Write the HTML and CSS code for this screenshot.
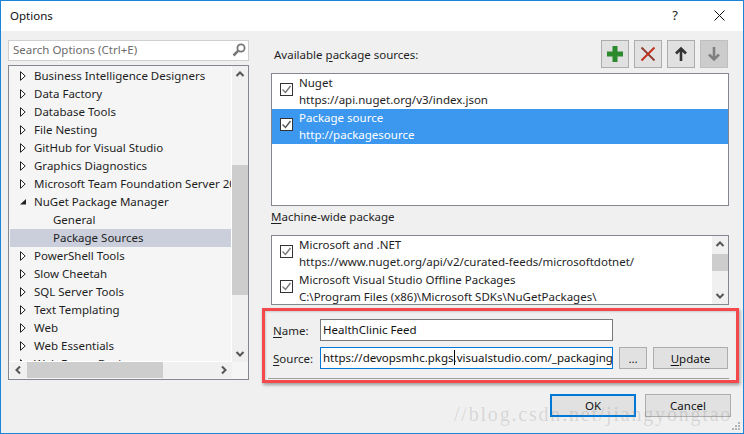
FILE: index.html
```html
<!DOCTYPE html>
<html lang="en">
<head>
<meta charset="utf-8">
<title>Options</title>
<link rel="stylesheet" href="styles.css">
</head>
<body>
<div class="window">
  <header class="titlebar">
    <span class="title">Options</span>
    <div class="title-actions">
      <span class="help">?</span>
      <svg class="close" width="11" height="11" viewBox="0 0 11 11"><path d="M.5.5l10 10M10.500.5l-10 10" stroke="#111" fill="none"/></svg>
    </div>
  </header>
  <main class="content">
    <aside class="left">
      <div class="search">
        <span>Search Options (Ctrl+E)</span>
        <svg width="14" height="14" viewBox="0 0 14 14"><circle cx="9" cy="5" r="3.6" fill="none" stroke="#777" stroke-width="1.8"/><path d="M6.300 7.700L1.500 12.500" stroke="#777" stroke-width="2.6"/></svg>
      </div>
      <div class="tree">
        <ul class="tree-rows">
          <li class="row"><svg class="tw" width="6" height="10" viewBox="0 0 6 10"><path d="M.5.700v8.600L5.200 5z" fill="#fff" stroke="#222"/></svg>Business Intelligence Designers</li>
          <li class="row"><svg class="tw" width="6" height="10" viewBox="0 0 6 10"><path d="M.5.700v8.600L5.200 5z" fill="#fff" stroke="#222"/></svg>Data Factory</li>
          <li class="row"><svg class="tw" width="6" height="10" viewBox="0 0 6 10"><path d="M.5.700v8.600L5.200 5z" fill="#fff" stroke="#222"/></svg>Database Tools</li>
          <li class="row"><svg class="tw" width="6" height="10" viewBox="0 0 6 10"><path d="M.5.700v8.600L5.200 5z" fill="#fff" stroke="#222"/></svg>File Nesting</li>
          <li class="row"><svg class="tw" width="6" height="10" viewBox="0 0 6 10"><path d="M.5.700v8.600L5.200 5z" fill="#fff" stroke="#222"/></svg>GitHub for Visual Studio</li>
          <li class="row"><svg class="tw" width="6" height="10" viewBox="0 0 6 10"><path d="M.5.700v8.600L5.200 5z" fill="#fff" stroke="#222"/></svg>Graphics Diagnostics</li>
          <li class="row"><svg class="tw" width="6" height="10" viewBox="0 0 6 10"><path d="M.5.700v8.600L5.200 5z" fill="#fff" stroke="#222"/></svg>Microsoft Team Foundation Server 2015 Power Tools</li>
          <li class="row"><svg class="tw" width="6" height="10" viewBox="0 0 6 10"><path d="M0 7.500L6 2v5.500z" fill="#222"/></svg>NuGet Package Manager</li>
          <li class="row child">General</li>
          <li class="row child selected">Package Sources</li>
          <li class="row"><svg class="tw" width="6" height="10" viewBox="0 0 6 10"><path d="M.5.700v8.600L5.200 5z" fill="#fff" stroke="#222"/></svg>PowerShell Tools</li>
          <li class="row"><svg class="tw" width="6" height="10" viewBox="0 0 6 10"><path d="M.5.700v8.600L5.200 5z" fill="#fff" stroke="#222"/></svg>Slow Cheetah</li>
          <li class="row"><svg class="tw" width="6" height="10" viewBox="0 0 6 10"><path d="M.5.700v8.600L5.200 5z" fill="#fff" stroke="#222"/></svg>SQL Server Tools</li>
          <li class="row"><svg class="tw" width="6" height="10" viewBox="0 0 6 10"><path d="M.5.700v8.600L5.200 5z" fill="#fff" stroke="#222"/></svg>Text Templating</li>
          <li class="row"><svg class="tw" width="6" height="10" viewBox="0 0 6 10"><path d="M.5.700v8.600L5.200 5z" fill="#fff" stroke="#222"/></svg>Web</li>
          <li class="row"><svg class="tw" width="6" height="10" viewBox="0 0 6 10"><path d="M.5.700v8.600L5.200 5z" fill="#fff" stroke="#222"/></svg>Web Essentials</li>
          <li class="row"><svg class="tw" width="6" height="10" viewBox="0 0 6 10"><path d="M.5.700v8.600L5.200 5z" fill="#fff" stroke="#222"/></svg>Web Forms Designer</li>
        </ul>
        <div class="vbar tree-vbar">
          <svg class="arrow" width="16" height="16" viewBox="0 0 16 16"><path d="M4.500 10L8 6.500l3.500 3.500" fill="none" stroke="#555" stroke-width="2"/></svg>
          <div class="track"><div class="thumb tree-vthumb"></div></div>
          <svg class="arrow" width="16" height="16" viewBox="0 0 16 16"><path d="M4.500 6L8 9.500 11.500 6" fill="none" stroke="#555" stroke-width="2"/></svg>
        </div>
        <div class="hbar">
          <svg class="arrow" width="16" height="16" viewBox="0 0 16 16"><path d="M10 4.500L6.500 8l3.500 3.500" fill="none" stroke="#555" stroke-width="2"/></svg>
          <div class="htrack"><div class="hthumb"></div></div>
          <svg class="arrow" width="16" height="16" viewBox="0 0 16 16"><path d="M6 4.500L9.500 8 6 11.500" fill="none" stroke="#555" stroke-width="2"/></svg>
        </div>
      </div>
    </aside>
    <section class="right">
      <div class="sources-head">
        <span class="avail">Available <u>p</u>ackage sources:</span>
        <div class="tools">
          <button class="tool"><svg width="16" height="16" viewBox="0 0 16 16"><path d="M5.500 0h5v5.500H16v5h-5.500V16h-5v-5.500H0v-5h5.500z" fill="#2a8a2c"/></svg></button>
          <button class="tool"><svg width="16" height="16" viewBox="0 0 16 16"><path d="M1.500 1.500l13 13" stroke="#8f3a2c" stroke-width="1.800"/><path d="M14.500 1.500l-13 13" stroke="#c0301c" stroke-width="2"/></svg></button>
          <button class="tool"><svg width="14" height="16" viewBox="0 0 14 16"><path d="M7 15V2.500M2 7.500l5-5 5 5" fill="none" stroke="#333" stroke-width="2.600"/></svg></button>
          <button class="tool disabled"><svg width="14" height="16" viewBox="0 0 14 16"><path d="M7 1v12.500M2 8.500l5 5 5-5" fill="none" stroke="#808080" stroke-width="2.600"/></svg></button>
        </div>
      </div>
      <div class="list list-main">
        <div class="item">
          <span class="check"><svg width="11" height="11" viewBox="0 0 11 11"><path d="M1.500 5.500l3 3 5-6.500" fill="none" stroke="#777" stroke-width="1.400"/></svg></span>
          <div class="item-text"><div>Nuget</div><div>https://api.nuget.org/v3/index.json</div></div>
        </div>
        <div class="item active">
          <span class="check"><svg width="11" height="11" viewBox="0 0 11 11"><path d="M1.500 5.500l3 3 5-6.500" fill="none" stroke="#555" stroke-width="1.400"/></svg></span>
          <div class="item-text"><div>Package source</div><div>http://packagesource</div></div>
        </div>
      </div>
      <div class="machine-label"><u>M</u>achine-wide package</div>
      <div class="list list-machine">
        <div class="machine-items">
          <div class="item">
            <span class="check"><svg width="11" height="11" viewBox="0 0 11 11"><path d="M1.500 5.500l3 3 5-6.500" fill="none" stroke="#777" stroke-width="1.400"/></svg></span>
            <div class="item-text"><div>Microsoft and .NET</div><div>https://www.nuget.org/api/v2/curated-feeds/microsoftdotnet/</div></div>
          </div>
          <div class="item">
            <span class="check"><svg width="11" height="11" viewBox="0 0 11 11"><path d="M1.500 5.500l3 3 5-6.500" fill="none" stroke="#777" stroke-width="1.400"/></svg></span>
            <div class="item-text"><div>Microsoft Visual Studio Offline Packages</div><div>C:\Program Files (x86)\Microsoft SDKs\NuGetPackages\</div></div>
          </div>
        </div>
        <div class="vbar list-vbar">
          <svg class="arrow" width="16" height="16" viewBox="0 0 16 16"><path d="M4.500 10L8 6.500l3.500 3.500" fill="none" stroke="#555" stroke-width="2"/></svg>
          <div class="track"><div class="thumb list-vthumb"></div></div>
          <svg class="arrow" width="16" height="16" viewBox="0 0 16 16"><path d="M4.500 6L8 9.500 11.500 6" fill="none" stroke="#555" stroke-width="2"/></svg>
        </div>
      </div>
      <div class="form">
        <div class="form-row">
          <span class="form-label"><u>N</u>ame:</span>
          <div class="field">HealthClinic Feed</div>
        </div>
        <div class="form-row">
          <span class="form-label"><u>S</u>ource:</span>
          <div class="field focused">https://devopsmhc.pkgs<span class="caret"></span>.visualstudio.com/_packaging</div>
          <button class="btn dots">...</button>
          <button class="btn update"><u>U</u>pdate</button>
        </div>
      </div>
      <div class="separator"></div>
    </section>
  </main>
  <footer class="footer">
    <button class="btn action default">OK</button>
    <button class="btn action">Cancel</button>
  </footer>
  <svg class="grip" width="10" height="10" viewBox="0 0 10 10"><path d="M7 1h2v2H7zM4 4h2v2H4zM7 4h2v2H7zM1 7h2v2H1zM4 7h2v2H4zM7 7h2v2H7z" fill="#b5b5b5"/></svg>
  <div class="annotation"></div>
  <div class="watermark">//blog.csdn.net/jiangyongtao</div>
</div>
</body>
</html>
```
FILE: styles.css
```css
* { box-sizing: border-box; }
html, body { margin: 0; padding: 0; }
body {
  width: 744px;
  height: 434px;
  overflow: hidden;
  font-family: "Noto Sans", "Open Sans", sans-serif;
  font-size: 11.5px;
  color: #1e1e1e;
}
u { text-underline-offset: 2px; }
.window {
  position: relative;
  width: 744px;
  height: 434px;
  border: 1px solid #1a84d8;
  background: #f0f0f0;
  display: flex;
  flex-direction: column;
  overflow: hidden;
}
.titlebar {
  height: 30px;
  flex: none;
  background: #fff;
  display: flex;
  align-items: center;
  justify-content: space-between;
  padding: 0 18px 2px 9px;
}
.title { color: #111; }
.title-actions { display: flex; align-items: center; gap: 36px; }
.help { font-size: 13px; color: #222; }
.close { display: block; }
.content {
  flex: none;
  height: 349px;
  display: flex;
  gap: 22px;
  padding: 9px 14px 0 7px;
}
.left { width: 241px; flex: none; display: flex; flex-direction: column; gap: 4px; }
.search {
  height: 21px;
  flex: none;
  background: #fff;
  border: 1px solid #cfcfcf;
  display: flex;
  align-items: center;
  justify-content: space-between;
  padding: 0 2px 2px 4px;
  color: #6d6d6d;
}
.tree {
  height: 315px;
  flex: none;
  border: 1px solid #828790;
  background: #f5f5f5;
  display: grid;
  grid-template-columns: 222px 16px;
  grid-template-rows: 296px 16px;
  padding-left: 1px;
}
.tree-rows {
  list-style: none;
  margin: 0;
  padding: 1px 0 0;
  min-width: 0;
  overflow: hidden;
  border-right: 1px solid #fff;
  border-bottom: 1px solid #fff;
}
.row {
  height: 18px;
  line-height: 18px;
  display: flex;
  align-items: center;
  white-space: nowrap;
  padding-left: 10px;
}
.tw { flex: none; margin-right: 8px; }
.child { padding-left: 43px; }
.selected { background: #cbcfdb; }
.vbar { display: flex; flex-direction: column; align-items: center; }
.tree-vbar { background: #f0f0f0; height: 296px; }
.arrow { flex: none; display: block; }
.track { flex: 1; width: 16px; }
.thumb { background: #cdcdcd; width: 16px; }
.tree-vthumb { height: 130px; margin-top: 83px; }
.hbar {
  display: flex;
  align-items: center;
  background: #f0f0f0;
  height: 16px;
  grid-column: 1 / span 2;
  width: 222px;
}
.htrack { flex: 1; height: 16px; padding-left: 1px; }
.hthumb { width: 136px; height: 16px; background: #cdcdcd; }
.right { flex: 1; min-width: 0; display: flex; flex-direction: column; }
.sources-head {
  height: 28px;
  flex: none;
  display: flex;
  justify-content: space-between;
  padding-left: 3px;
  align-items: center;
}
.tools { display: flex; gap: 5px; margin-right: 1px; }
.tool {
  width: 28px;
  height: 28px;
  padding: 0;
  border: 1px solid #adadad;
  background: #e1e1e1;
  display: flex;
  align-items: center;
  justify-content: center;
}
.tool.disabled { background: #cccccc; border-color: #bfbfbf; }
.list { background: #fff; border: 1px solid #828790; }
.list-main { height: 133px; margin-top: 5px; flex: none; }
.item { height: 35px; display: flex; padding-left: 8px; gap: 6px; }
.item.active { background: #3c98ee; color: #fff; }
.check {
  flex: none;
  width: 13px;
  height: 13px;
  margin-top: 9px;
  background: #fff;
  border: 1px solid #333;
  display: flex;
  align-items: center;
  justify-content: center;
}
.item-text { line-height: 17px; white-space: nowrap; }
.machine-label { height: 29px; flex: none; line-height: 22px; }
.list-machine { height: 70px; flex: none; display: flex; overflow: hidden; }
.machine-items { flex: 1; min-width: 0; }
.list-vbar { width: 16px; flex: none; background: #f0f0f0; height: 68px; }
.list-vthumb { height: 17px; margin-top: 2px; }
.form { display: flex; flex-direction: column; gap: 6px; padding-top: 14px; padding-left: 2px; }
.form-row { display: flex; align-items: center; height: 22px; }
.form-label { width: 47px; flex: none; }
.field {
  width: 293px;
  height: 22px;
  flex: none;
  background: #fff;
  border: 1px solid #7a7a7a;
  line-height: 19px;
  padding-left: 2px;
  white-space: nowrap;
  overflow: hidden;
  color: #111;
}
.field.focused { border-color: #0078d7; }
.caret { display: inline-block; width: 1px; height: 15px; background: #000; vertical-align: -3px; margin-right: -1px; }
.btn {
  font: inherit;
  color: #111;
  background: #e1e1e1;
  border: 1px solid #adadad;
  padding: 0;
  height: 22px;
}
.dots { width: 28px; margin-left: 6px; }
.update { width: 75px; margin-left: 6px; }
.separator { height: 1px; background: #a0a0a0; margin: 9px 0 0 -3px; flex: none; }
.footer {
  flex: 1;
  display: flex;
  justify-content: flex-end;
  align-items: flex-start;
  gap: 9px;
  padding: 14px 12px 0 0;
}
.action { width: 86px; height: 23px; }
.action.default { border: 2px solid #0078d7; }
.grip { position: absolute; right: 2px; bottom: 2px; }
.annotation {
  position: absolute;
  left: 261px;
  top: 307px;
  width: 477px;
  height: 75px;
  border: 3px solid #f5484c;
  box-shadow: 1px 2px 3px rgba(0, 0, 0, .35), inset 1px 1px 2px rgba(0, 0, 0, .15);
}
.watermark {
  position: absolute;
  left: 453px;
  top: 402px;
  font-family: "Liberation Serif", serif;
  font-size: 20px;
  letter-spacing: 1.800px;
  color: rgba(120, 120, 120, .22);
  white-space: nowrap;
  pointer-events: none;
}
```
